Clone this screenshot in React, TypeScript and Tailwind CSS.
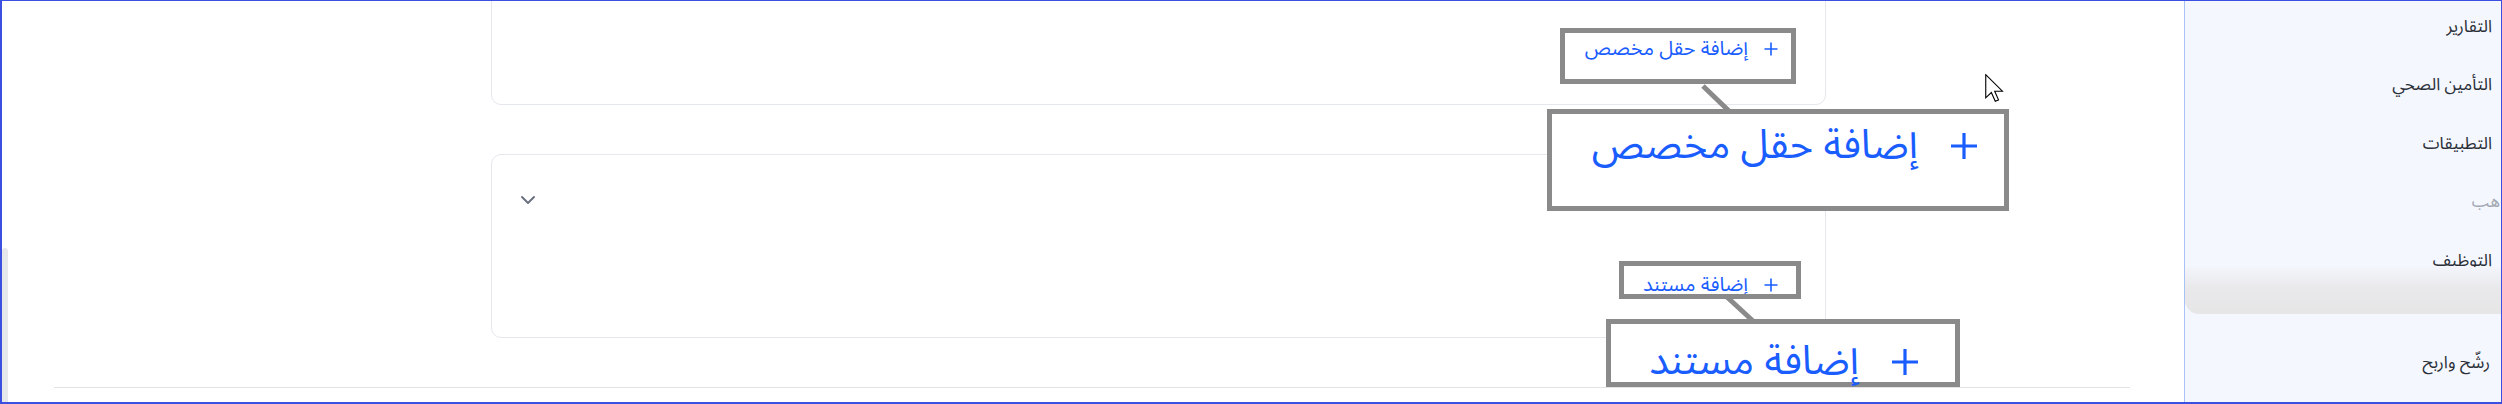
import React from "react";

function Plus({ className }: { className?: string }) {
  return (
    <svg viewBox="0 0 16 16" className={className} fill="none" stroke="currentColor" strokeWidth={1.6}>
      <path d="M8 1.5v13M1.5 8h13" />
    </svg>
  );
}

function Chevron() {
  return (
    <svg viewBox="0 0 24 24" className="block h-6 w-6 text-[#6b7280]" fill="none" stroke="currentColor" strokeWidth={2} strokeLinecap="round" strokeLinejoin="round">
      <path d="m6 9 6 6 6-6" />
    </svg>
  );
}

function AddLabel({ label }: { label: string }) {
  return (
    <span className="inline-flex h-5 items-center gap-[15px] whitespace-nowrap font-['Noto_Sans_Arabic','Noto_Sans',sans-serif] text-[20px] leading-5 text-[#1a5dff]">
      <span dir="rtl">{label}</span>
      <Plus className="h-4 w-4 shrink-0" />
    </span>
  );
}

function Cursor() {
  return (
    <svg width="19" height="28" viewBox="0 0 13.5 20" className="block">
      <path d="M0.5 0.5 L0.5 17 L4.5 13.2 L7.3 19.5 L9.6 18.5 L6.9 12.3 L12.4 12.3 Z" fill="#fff" stroke="#000" strokeWidth={0.8} strokeLinejoin="miter" />
    </svg>
  );
}

const navTop = ["التقارير", "التأمين الصحي", "التطبيقات"];

export default function App() {
  return (
    <div className="relative flex h-[404px] w-[2502px] overflow-hidden bg-white font-['Noto_Sans_Arabic','Noto_Sans',sans-serif]">
      {/* main content */}
      <main className="relative flex w-[2184px] shrink-0 flex-col">
        <div className="absolute bottom-0 left-[2px] top-[248px] w-[6px] rounded-t-[3px] bg-[#e5e7eb]" />

        <div className="ml-[491px] mt-[-95px] flex h-[200px] w-[1335px] flex-col items-end justify-end rounded-[10px] border border-[#e4e7ee] pb-[42px] pr-[46px]">
          <div className="relative">
            <AddLabel label="إضافة حقل مخصص" />
            <div className="pointer-events-none absolute right-[-17px] top-[-10px] h-[56px] w-[236px] border-[5px] border-[#8a8a8a]" />
          </div>
        </div>

        <div className="ml-[491px] mt-[49px] flex h-[184px] w-[1335px] flex-col rounded-[10px] border border-[#e4e7ee] pl-[24px] pr-[46px] pt-[33px]">
          <Chevron />
          <div className="relative mt-[62px] self-end">
            <AddLabel label="إضافة مستند" />
            <div className="pointer-events-none absolute right-[-22px] top-[-13px] h-[38px] w-[182px] border-[5px] border-[#8a8a8a]" />
          </div>
        </div>

        <div className="mx-[54px] mt-[49px] h-px bg-[#e3e3e3]" />
      </main>

      {/* sidebar */}
      <aside dir="rtl" className="flex w-[318px] shrink-0 flex-col border-l border-[#a9c2f5] bg-[#f4f7fe] text-[17px] text-[#2b2f38]">
        <div className="mt-[-2px]">
          {navTop.map((t) => (
            <div key={t} className="flex h-[58.5px] items-center whitespace-nowrap pr-[10px]">
              {t}
            </div>
          ))}
          <div className="flex h-[58.5px] items-center pr-[2px] text-[#a3a8b3]">هب</div>
          <div className="flex h-[58.5px] items-center pr-[10px]">التوظيف</div>
        </div>
        <div className="mt-[-23.5px] h-[47px] rounded-bl-[14px] bg-linear-to-b from-[#f3f5fb] via-[#e9e9eb] via-45% to-[#e6e6e7]" />
        <div className="mt-[38px] flex h-6 items-center whitespace-nowrap pr-[12px]">رشّح واربح</div>
      </aside>

      {/* annotation overlay: connectors, magnified copies, cursor */}
      <svg className="pointer-events-none absolute left-0 top-0" width="2502" height="404">
        <line x1="1703" y1="86" x2="1729" y2="111" stroke="#8a8a8a" strokeWidth={5} />
        <line x1="1727" y1="297" x2="1753" y2="321" stroke="#8a8a8a" strokeWidth={5} />
      </svg>

      <div className="absolute left-[1547px] top-[109px] h-[102px] w-[462px] border-[5px] border-[#8a8a8a] bg-white">
        <div className="flex h-[46px] w-[226px] origin-top-left scale-200 justify-end pr-[12px] pt-[5px]">
          <div>
            <AddLabel label="إضافة حقل مخصص" />
          </div>
        </div>
      </div>

      <div className="absolute left-[1606px] top-[319px] h-[68px] w-[354px] border-[5px] border-[#8a8a8a] bg-white">
        <div className="flex h-[29px] w-[172px] origin-top-left scale-200 justify-end pr-[17px] pt-[8px]">
          <div>
            <AddLabel label="إضافة مستند" />
          </div>
        </div>
      </div>

      <div className="pointer-events-none absolute left-[1985px] top-[74px]">
        <Cursor />
      </div>

      {/* window frame */}
      <div className="pointer-events-none absolute inset-0 border-b-2 border-l-2 border-r border-t border-[#3b50e0]" />
    </div>
  );
}
